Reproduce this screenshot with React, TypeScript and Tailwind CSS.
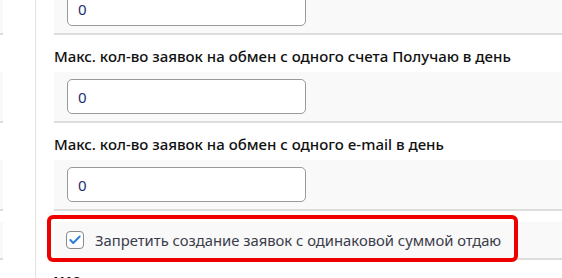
import { Check } from "lucide-react";

const font = { fontFamily: '"Noto Sans", "Open Sans", Arial, sans-serif' };

function InputRow({ value, first }: { value: string; first?: boolean }) {
    return (
        <div className={`bg-[#f9f9f9] border-b-2 border-[#dddddd] pl-[13px] pt-[7px] pb-[7px] ${first ? "-mt-[16px]" : ""}`}>
            <input
                readOnly
                value={value}
                className="block w-[239px] h-[35px] rounded-[5px] border border-[#9a9a9a] bg-white px-[10px] text-[15px] text-[#24306e] outline-none"
            />
        </div>
    );
}

function FieldLabel({ children }: { children: string }) {
    return (
        <div className="pt-[12px] pb-[6px] leading-[19px] text-[15px] font-medium text-[#111111] whitespace-nowrap">
            {children}
        </div>
    );
}

function SideStub({ className }: { className: string }) {
    return <div className={`w-[3px] bg-[#f9f9f9] border-b-2 border-[#dddddd] ${className}`} />;
}

export default function App() {
    return (
        <div className="w-[562px] h-[278px] overflow-hidden bg-white flex" style={font}>
            {/* LEFT (cut off) COLUMN */}
            <div className="w-[36px] shrink-0 border-r border-[#e2e2e2] flex flex-col">
                <SideStub className="h-[36px] -mt-[1px]" />
                <SideStub className="h-[51px] mt-[37px]" />
                <SideStub className="h-[51px] mt-[37px]" />
                <SideStub className="h-[38px] mt-[11px]" />
            </div>

            {/* SETTINGS PANEL */}
            <div className="flex-1 pl-[18px] flex flex-col">
                <InputRow value="0" first />
                <FieldLabel>Макс. кол-во заявок на обмен с одного счета Получаю в день</FieldLabel>
                <InputRow value="0" />
                <FieldLabel>Макс. кол-во заявок на обмен с одного e-mail в день</FieldLabel>
                <InputRow value="0" />

                <div className="relative mt-[11px]">
                    <label className="flex items-center gap-[11px] bg-[#f9f9f9] border-b-2 border-[#dddddd] h-[38px] pl-[12px] text-[14.8px] text-[#3b3d4a] whitespace-nowrap">
                        <span className="w-[18px] h-[18px] rounded-[4px] border border-[#8a8a8a] bg-white flex items-center justify-center">
                            <Check size={14} strokeWidth={3.5} className="text-[#2f7fd8]" />
                        </span>
                        Запретить создание заявок с одинаковой суммой отдаю
                    </label>
                    {/* annotation frame */}
                    <div className="absolute -left-[7px] -top-[7px] w-[471px] h-[47px] rounded-[6px] border-[4px] border-[#ee0000] pointer-events-none" />
                </div>

                <div className="mt-[12px] text-[15px] font-bold text-[#111111] leading-[19px]">Х10</div>
            </div>
        </div>
    );
}
